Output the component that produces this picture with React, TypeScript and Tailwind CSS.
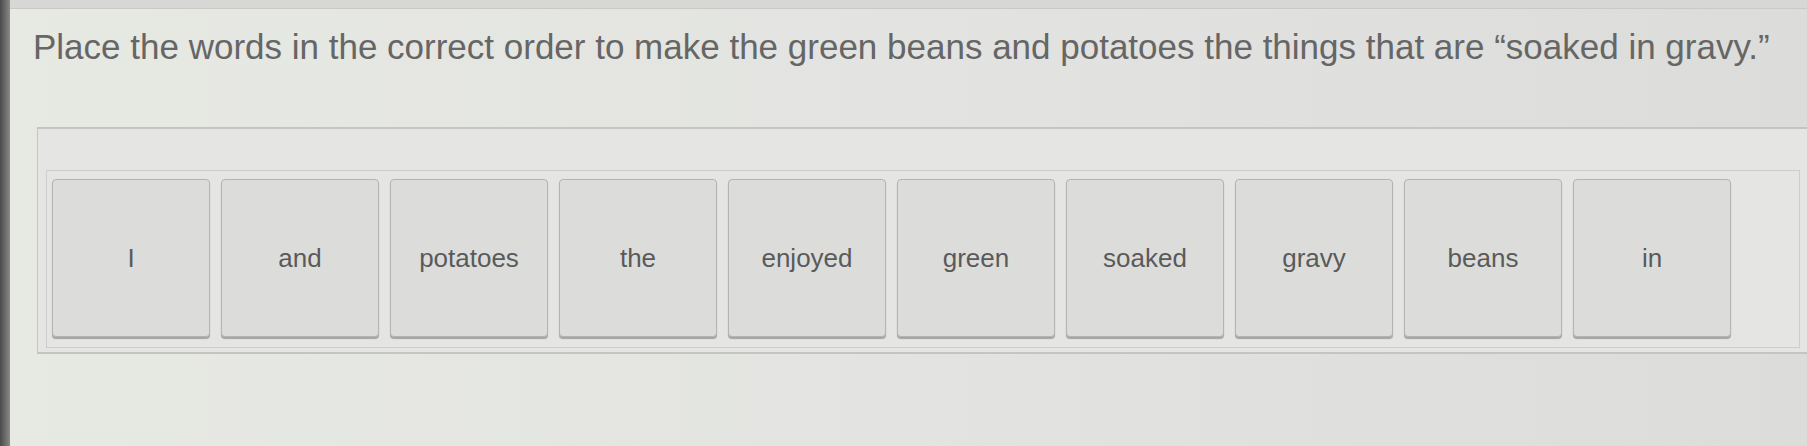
const words = ["I", "and", "potatoes", "the", "enjoyed", "green", "soaked", "gravy", "beans", "in"];

function WordTile({ word }: { word: string }) {
  return (
    <div className="flex h-[158px] w-[158px] shrink-0 items-center justify-center rounded-[4px] border border-[#b4b4b2] bg-[#dcdddb] shadow-[0_2px_1px_#a4a4a2]">
      <span className="text-[26px] text-[#5a5a5a]">{word}</span>
    </div>
  );
}

export default function App() {
  return (
    <div className="flex h-[446px] w-[1807px] overflow-hidden bg-gradient-to-r from-[#e7e9e3] via-[#e3e4e1] to-[#dcdcdb] font-['Liberation_Sans',Arial,sans-serif]">
      <div className="w-[10px] shrink-0 bg-gradient-to-r from-[#4a4a4a] to-[#8a8a8a]" />
      <div className="flex flex-1 flex-col">
        <div className="h-[9px] border-b border-[#c9c9c7] bg-[#d7d8d6]" />
        <h1 className="pl-[23px] pt-[18px] text-[35px] leading-[40px] text-[#656665]">
          Place the words in the correct order to make the green beans and potatoes the things that are “soaked in gravy.”
        </h1>
        <div className="ml-[27px] mt-[60px] h-[227px] border-t-2 border-b-2 border-l border-[#c4c4c2] bg-[#e5e6e3] pl-[8px] pr-[7px] pt-[41px]">
          <div className="flex gap-[11px] border border-[#cdcdcb] pb-[10px] pl-[5px] pt-[8px]">
            {words.map((w) => (
              <WordTile key={w} word={w} />
            ))}
          </div>
        </div>
      </div>
    </div>
  );
}
